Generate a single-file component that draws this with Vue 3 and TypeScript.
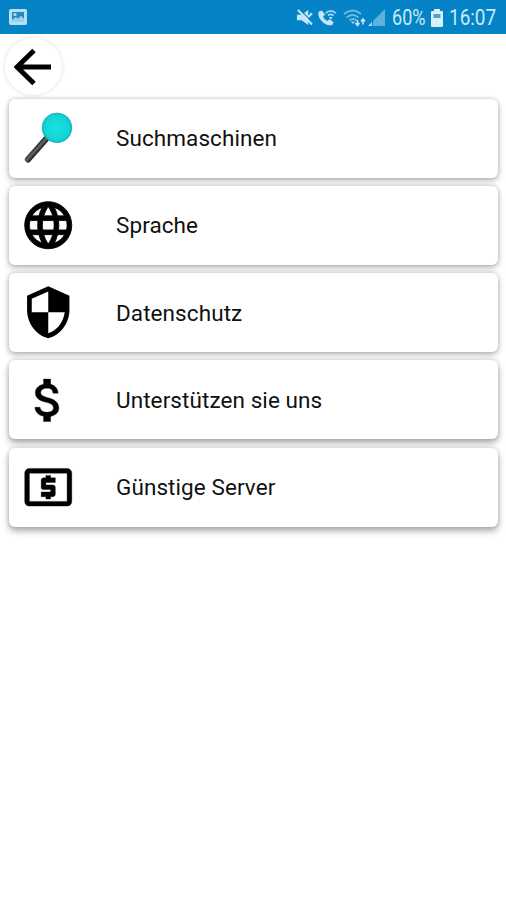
<script setup lang="ts">
interface MenuItem {
  id: string
  label: string
  path?: string
}

const items: MenuItem[] = [
  { id: 'search', label: 'Suchmaschinen' },
  {
    id: 'language',
    label: 'Sprache',
    path: 'M11.99 2C6.47 2 2 6.48 2 12s4.47 10 9.99 10C17.52 22 22 17.52 22 12S17.52 2 11.99 2zm6.93 6h-2.95c-.32-1.25-.78-2.45-1.38-3.56 1.84.63 3.37 1.91 4.33 3.56zM12 4.04c.83 1.2 1.48 2.53 1.91 3.96h-3.82c.43-1.43 1.08-2.76 1.91-3.96zM4.26 14C4.1 13.36 4 12.69 4 12s.1-1.36.26-2h3.38c-.08.66-.14 1.32-.14 2 0 .68.06 1.34.14 2H4.26zm.82 2h2.95c.32 1.25.78 2.45 1.38 3.56-1.84-.63-3.37-1.9-4.33-3.56zm2.95-8H5.08c.96-1.66 2.49-2.93 4.33-3.56C8.81 5.55 8.35 6.75 8.03 8zM12 19.96c-.83-1.2-1.48-2.53-1.91-3.96h3.82c-.43 1.43-1.08 2.76-1.91 3.96zM14.34 14H9.66c-.09-.66-.16-1.32-.16-2 0-.68.07-1.35.16-2h4.68c.09.65.16 1.32.16 2 0 .68-.07 1.34-.16 2zm.25 5.56c.6-1.11 1.06-2.31 1.38-3.56h2.95c-.96 1.65-2.49 2.93-4.33 3.56zM16.36 14c.08-.66.14-1.32.14-2 0-.68-.06-1.34-.14-2h3.38c.16.64.26 1.31.26 2s-.1 1.36-.26 2h-3.38z',
  },
  {
    id: 'privacy',
    label: 'Datenschutz',
    path: 'M12 1L3 5v6c0 5.55 3.84 10.74 9 12 5.16-1.26 9-6.45 9-12V5l-9-4zm0 10.99h7c-.53 4.12-3.28 7.79-7 8.94V12H5V6.3l7-3.11v8.8z',
  },
  {
    id: 'support',
    label: 'Unterstützen sie uns',
    path: 'M11.8 10.9c-2.27-.59-3-1.2-3-2.15 0-1.09 1.01-1.85 2.7-1.85 1.78 0 2.44.85 2.5 2.1h2.21c-.07-1.72-1.12-3.3-3.21-3.81V3h-3v2.16c-1.94.42-3.5 1.68-3.5 3.61 0 2.31 1.91 3.46 4.7 4.13 2.5.6 3 1.48 3 2.41 0 .69-.49 1.79-2.7 1.79-2.06 0-2.87-.92-2.98-2.1h-2.2c.12 2.19 1.76 3.42 3.68 3.83V21h3v-2.15c1.95-.37 3.5-1.5 3.5-3.55 0-2.84-2.43-3.81-4.7-4.4z',
  },
  {
    id: 'server',
    label: 'Günstige Server',
    path: 'M11 17h2v-1h1c.55 0 1-.45 1-1v-3c0-.55-.45-1-1-1h-3v-1h4V8h-2V7h-2v1h-1c-.55 0-1 .45-1 1v3c0 .55.45 1 1 1h3v1H9v2h2v1zm9-13H4c-1.11 0-1.99.89-1.99 2L2 18c0 1.11.89 2 2 2h16c1.11 0 2-.89 2-2V6c0-1.11-.89-2-2-2zm0 14H4V6h16v12z',
  },
]
</script>

<template>
  <div class="screen">
    <header class="status">
      <svg class="picture" viewBox="0 0 18 16">
        <rect width="18" height="16" rx="2" fill="#b5def5" />
        <path d="M3 3h12v7l-3-3-3 3-2-1-4 2z" fill="#2789c0" />
        <circle cx="6" cy="5.5" r="1.6" fill="#b5def5" />
        <path d="M3 13V11l4-3 2 2 3-3 3 3v3z" fill="#9bd0ee" />
      </svg>
      <div class="indicators">
        <svg class="mute" viewBox="0 0 18 18">
          <path d="M1 6h5l7-5v16l-7-5H1z" fill="#c3e6f8" />
          <path d="M5 1.500l13 13" stroke="#0484c6" stroke-width="1.200" />
          <path d="M2 1l15 15.500M13 8.500l4-4" stroke="#c3e6f8" stroke-width="2.200" />
        </svg>
        <svg class="call" viewBox="0 0 20 18">
          <path d="M1 3l3-1 3 4-2 2c1 2.500 3 4.500 5 5l2-2 4 3-1 2.500C8 19-1 10 1 3z" fill="#c3e6f8" stroke="#c3e6f8" stroke-width=".8" />
          <path d="M8 4.500q5.500-5 11 0M10.500 7q3-2.500 6 0" fill="none" stroke="#a6d8f2" stroke-width="1.700" />
          <path d="M11.500 8.500h4l-2 2.500z" fill="#c3e6f8" />
        </svg>
        <svg class="wifi" viewBox="0 0 24 18">
          <g fill="none" stroke="#6fbbe2" stroke-width="1.700">
            <path d="M1 5q8.500-7 17 0" />
            <path d="M3.500 8.500q6-5 12 0" />
            <path d="M6.500 11.500q3.500-3 7 0" />
          </g>
          <path d="M8 12.500h4l-2 3z" fill="#8ccbea" />
          <path d="M14.500 11v5M12.500 14l2 2.500 2-2.500M20 15.500v-5M18 12.500l2-2.500 2 2.500" fill="none" stroke="#c3e6f8" stroke-width="1.600" />
        </svg>
        <svg class="signal" viewBox="0 0 17 17">
          <path d="M17 0v17H5v-5z" fill="#5eb1dc" />
          <path d="M4 13v4H0z" fill="#a6d8f2" />
        </svg>
        <span class="percent"><span>60%</span></span>
        <svg class="battery" viewBox="0 0 12 18">
          <path d="M3 0h6v2h2q1 0 1 1v14q0 1-1 1H1q-1 0-1-1V3q0-1 1-1h2z" fill="#d9f0fb" />
          <path d="M2.500 5h7v4h-7z" fill="#4da4d2" />
        </svg>
        <span class="clock"><span>16:07</span></span>
      </div>
    </header>

    <nav class="toolbar">
      <button class="back" aria-label="Zurück">
        <svg viewBox="0 0 38 38">
          <path d="M20 2.500L3 19l17 16.500M3 19h34" fill="none" stroke="#000" stroke-width="5" />
        </svg>
      </button>
    </nav>

    <main class="menu">
      <div v-for="item in items" :key="item.id" class="card" :class="item.id">
        <svg v-if="item.path" class="icon" viewBox="0 0 24 24">
          <path :d="item.path" />
        </svg>
        <svg v-else class="icon" viewBox="0 0 57 57">
          <defs>
            <radialGradient id="lens">
              <stop offset="0" stop-color="#18e2e2" />
              <stop offset="0.800" stop-color="#16d3d5" />
              <stop offset="1" stop-color="#10b7be" />
            </radialGradient>
            <linearGradient id="grip" gradientUnits="userSpaceOnUse" x1="14" y1="37" x2="19.500" y2="42">
              <stop offset="0" stop-color="#111" />
              <stop offset="0.500" stop-color="#666" />
              <stop offset="1" stop-color="#111" />
            </linearGradient>
          </defs>
          <path d="M26.500 29L8 50" stroke="url(#grip)" stroke-width="6.200" stroke-linecap="round" />
          <circle cx="37.300" cy="18" r="15.300" fill="url(#lens)" />
        </svg>
        <span class="label">{{ item.label }}</span>
      </div>
    </main>
  </div>
</template>

<style>
body {
  margin: 0;
  background: #fff;
}
</style>

<style scoped>
.screen {
  width: 506px;
  height: 900px;
  overflow: hidden;
  background: #fff;
  font-family: Roboto, "Liberation Sans", sans-serif;
}
.status {
  display: flex;
  box-sizing: border-box;
  height: 34px;
  padding: 0 10px 0 9px;
  align-items: center;
  justify-content: space-between;
  background: #0484c6;
  color: #c9e9f9;
}
.picture {
  width: 18px;
  height: 16px;
}
.indicators {
  display: flex;
  align-items: center;
  padding-top: 1px;
}
.mute {
  width: 17px;
  height: 17px;
  margin-right: 5px;
}
.call {
  width: 19px;
  height: 17px;
  margin-right: 6px;
}
.wifi {
  width: 24px;
  height: 18px;
  margin-right: 1px;
}
.signal {
  width: 17px;
  height: 17px;
  margin-right: 7px;
}
.percent,
.clock {
  font-size: 22px;
  line-height: 26px;
  white-space: nowrap;
}
.percent {
  width: 35px;
}
.battery {
  width: 12px;
  height: 18px;
  margin: 0 6px 0 4px;
}
.clock {
  width: 47px;
}
.percent span,
.clock span {
  display: inline-block;
  transform: scaleX(0.86);
  transform-origin: left;
}
.percent span {
  transform: scaleX(0.82);
}
.toolbar {
  display: flex;
  height: 64.500px;
  padding: 4px 0 0 5px;
  box-sizing: border-box;
}
.back {
  display: flex;
  width: 57px;
  height: 57px;
  padding: 0 1px 0 0;
  border: 0;
  border-radius: 50%;
  align-items: center;
  justify-content: center;
  background: #fff;
  box-shadow: 0 0 4px rgba(0, 0, 0, 0.14);
}
.back svg {
  width: 38px;
  height: 38px;
}
.menu {
  display: flex;
  flex-direction: column;
  gap: 8.300px;
  padding: 0 8px 0 9px;
}
.card {
  display: flex;
  height: 79px;
  align-items: center;
  border-radius: 6px;
  background: #fff;
  box-shadow: 0 0 4px rgba(0, 0, 0, 0.2), 0 3px 7px rgba(0, 0, 0, 0.24);
}
.support,
.server {
  box-shadow: 0 0 4px rgba(0, 0, 0, 0.16), 0 4px 7px rgba(0, 0, 0, 0.32);
}
.icon {
  width: 56.500px;
  height: 56.500px;
  margin-left: 11px;
  flex: none;
}
.language .icon path {
  stroke: #000;
  stroke-width: 0.350;
}
.support .icon path,
.server .icon path {
  stroke: #000;
  stroke-width: 0.150;
}
.label {
  margin-left: 39.500px;
  color: #111;
  font-size: 22.500px;
  letter-spacing: 0.080px;
  white-space: nowrap;
}
</style>
